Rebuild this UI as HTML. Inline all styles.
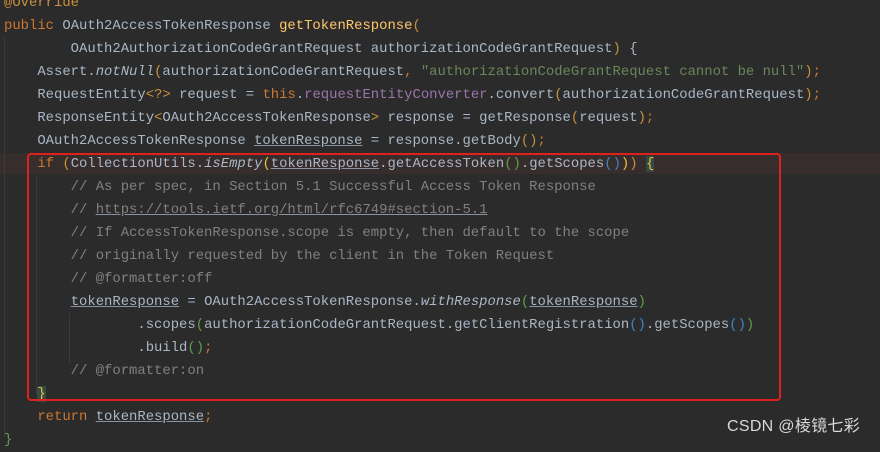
<!DOCTYPE html>
<html><head><meta charset="utf-8"><style>
body{margin:0;width:880px;height:443px;background:#2b2b2b;overflow:hidden;position:relative;font-family:"Liberation Mono",monospace;font-size:13.9px;color:#a9b7c6}
.l{position:absolute;left:4px;white-space:pre;height:23px;line-height:23px}
.k{color:#cc7832}.m{color:#ffc66d}.c{color:#808080}.s{color:#6a8759}.f{color:#9876aa}.i{font-style:italic}
.u{text-decoration:underline;text-decoration-color:#8a93a0}
.y{color:#e8c43a}.g{color:#5e9e4a}.b{color:#3f86c8}.o{color:#c8913a}
.hl{position:absolute;left:0;top:153px;width:880px;height:21px;background:#382d2d}
.box{position:absolute;left:27px;top:153px;width:750px;height:244px;border:2px solid #e0201c;border-radius:4px}
.g1{position:absolute;width:1px;background:#3a3a3a}
.wm{position:absolute;left:727px;top:412px;font-family:"Liberation Sans","Noto Sans CJK SC",sans-serif;font-size:16px;letter-spacing:0.3px;color:#d8d8d8}
</style></head><body>
<div class="hl"></div>
<div class="g1" style="left:4px;top:37px;height:400px"></div>
<div class="g1" style="left:36px;top:175px;height:220px"></div>
<div class="g1" style="left:69px;top:313px;height:50px"></div>
<div class="l" style="top:-8px"><span class="o">@Override</span></div>
<div class="l" style="top:15px"><span class="k">public </span>OAuth2AccessTokenResponse <span class="m">getTokenResponse</span><span class="o">(</span></div>
<div class="l" style="top:38px">        OAuth2AuthorizationCodeGrantRequest authorizationCodeGrantRequest<span class="o">)</span> {</div>
<div class="l" style="top:61px">    Assert.<span class="i">notNull</span><span class="o">(</span>authorizationCodeGrantRequest<span class="k">, </span><span class="s">"authorizationCodeGrantRequest cannot be null"</span><span class="o">)</span><span class="k">;</span></div>
<div class="l" style="top:84px">    RequestEntity<span class="o">&lt;?&gt;</span> request = <span class="k">this</span>.<span class="f">requestEntityConverter</span>.convert<span class="o">(</span>authorizationCodeGrantRequest<span class="o">)</span><span class="k">;</span></div>
<div class="l" style="top:107px">    ResponseEntity<span class="o">&lt;</span>OAuth2AccessTokenResponse<span class="o">&gt;</span> response = getResponse<span class="o">(</span>request<span class="o">)</span><span class="k">;</span></div>
<div class="l" style="top:130px">    OAuth2AccessTokenResponse <span class="u">tokenResponse</span> = response.getBody<span class="o">()</span><span class="k">;</span></div>
<div class="l" style="top:153px">    <span class="k">if </span><span class="o">(</span>CollectionUtils.<span class="i">isEmpty</span><span class="y">(</span><span class="u">tokenResponse</span>.getAccessToken<span class="g">()</span>.getScopes<span class="b">()</span><span class="y">)</span><span class="o">)</span> <span class="y" style="background:#344a44">{</span></div>
<div class="l c" style="top:176px">        // As per spec, in Section 5.1 Successful Access Token Response</div>
<div class="l c" style="top:199px">        // <span class="u">https://tools.ietf.org/html/rfc6749#section-5.1</span></div>
<div class="l c" style="top:222px">        // If AccessTokenResponse.scope is empty, then default to the scope</div>
<div class="l c" style="top:245px">        // originally requested by the client in the Token Request</div>
<div class="l c" style="top:268px">        // @formatter:off</div>
<div class="l" style="top:291px">        <span class="u">tokenResponse</span> = OAuth2AccessTokenResponse.<span class="i">withResponse</span><span class="g">(</span><span class="u">tokenResponse</span><span class="g">)</span></div>
<div class="l" style="top:314px">                .scopes<span class="g">(</span>authorizationCodeGrantRequest.getClientRegistration<span class="b">()</span>.getScopes<span class="b">()</span><span class="g">)</span></div>
<div class="l" style="top:337px">                .build<span class="g">()</span><span class="k">;</span></div>
<div class="l c" style="top:360px">        // @formatter:on</div>
<div class="l" style="top:383px">    <span class="y" style="background:#344a44">}</span></div>
<div class="l" style="top:406px">    <span class="k">return </span><span class="u">tokenResponse</span><span class="k">;</span></div>
<div class="l" style="top:429px"><span class="g">}</span></div>
<div class="box"></div>
<div class="wm">CSDN @棱镜七彩</div>
</body></html>
